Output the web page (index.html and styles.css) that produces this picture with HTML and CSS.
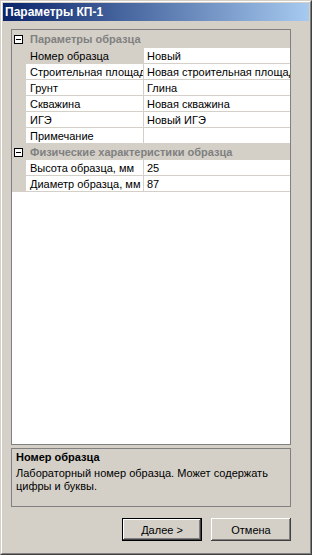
FILE: index.html
```html
<!DOCTYPE html>
<html lang="ru">
<head>
    <meta charset="UTF-8">
    <meta name="viewport" content="width=device-width, initial-scale=1.0">
    <title>Параметры КП-1</title>
    <link rel="stylesheet" href="styles.css">
</head>
<body>
    <div class="window">
        <div class="frame">
            <div class="titlebar">Параметры КП-1</div>
            <div class="client">
                <div class="grid">
                    <div class="row cat first">
                        <span class="gutter"><span class="toggle"></span></span>
                        <span class="cat-name">Параметры образца</span>
                    </div>
                    <div class="row selected">
                        <span class="gutter"></span>
                        <span class="name">Номер образца</span>
                        <span class="value">Новый</span>
                    </div>
                    <div class="row">
                        <span class="gutter"></span>
                        <span class="name">Строительная площадка</span>
                        <span class="value">Новая строительная площадка</span>
                    </div>
                    <div class="row">
                        <span class="gutter"></span>
                        <span class="name">Грунт</span>
                        <span class="value">Глина</span>
                    </div>
                    <div class="row">
                        <span class="gutter"></span>
                        <span class="name">Скважина</span>
                        <span class="value">Новая скважина</span>
                    </div>
                    <div class="row">
                        <span class="gutter"></span>
                        <span class="name">ИГЭ</span>
                        <span class="value">Новый ИГЭ</span>
                    </div>
                    <div class="row">
                        <span class="gutter"></span>
                        <span class="name">Примечание</span>
                        <span class="value"></span>
                    </div>
                    <div class="row cat">
                        <span class="gutter"><span class="toggle"></span></span>
                        <span class="cat-name">Физические характеристики образца</span>
                    </div>
                    <div class="row">
                        <span class="gutter"></span>
                        <span class="name">Высота образца, мм</span>
                        <span class="value">25</span>
                    </div>
                    <div class="row">
                        <span class="gutter"></span>
                        <span class="name">Диаметр образца, мм</span>
                        <span class="value">87</span>
                    </div>
                </div>

                <div class="help">
                    <div class="help-title">Номер образца</div>
                    <div class="help-text">Лабораторный номер образца. Может содержать цифры и буквы.</div>
                </div>

                <div class="buttons">
                    <button class="btn default">Далее &gt;</button>
                    <button class="btn">Отмена</button>
                </div>
            </div>
        </div>
    </div>
</body>
</html>
```

FILE: styles.css
```css
html, body {
    margin: 0;
    padding: 0;
}
body {
    font-family: "Liberation Sans", Arial, sans-serif;
    font-size: 11px;
    color: #000;
    background-color: #d4d0c8;
}
.window {
    width: 312px;
    height: 555px;
    box-sizing: border-box;
    border: 1px solid;
    border-color: #d4d0c8 #404040 #404040 #d4d0c8;
}
.frame {
    height: 100%;
    box-sizing: border-box;
    border: 1px solid;
    border-color: #fff #808080 #808080 #fff;
    padding: 1px;
    display: flex;
    flex-direction: column;
}
.titlebar {
    height: 18px;
    line-height: 18px;
    padding-left: 2px;
    font-size: 12px;
    font-weight: bold;
    color: #fff;
    background: linear-gradient(to right, #0a246a, #a6caf0);
    white-space: nowrap;
}
.client {
    flex: 1;
    display: flex;
    flex-direction: column;
    padding: 8px 18px 11px 8px;
}

/* property grid */
.grid {
    height: 416px;
    box-sizing: border-box;
    border: 1px solid #808080;
    background-color: #fff;
    overflow: hidden;
}
.row {
    display: flex;
    height: 16px;
    line-height: 15px;
}
.row.first {
    height: 17px;
    padding-top: 1px;
}
.gutter {
    width: 14px;
    flex: none;
    background-color: #d4d0c8;
    display: flex;
    align-items: center;
    padding-left: 2px;
    box-sizing: border-box;
}
.toggle {
    position: relative;
    width: 9px;
    height: 9px;
    box-sizing: border-box;
    border: 1px solid #000;
    background-color: #fff;
}
.toggle::after {
    content: "";
    position: absolute;
    left: 1px;
    top: 3px;
    width: 5px;
    height: 1px;
    background-color: #000;
}
.name,
.value {
    box-sizing: border-box;
    border-bottom: 1px solid #d4d0c8;
    padding-top: 1px;
    white-space: nowrap;
    overflow: hidden;
}
.name {
    width: 118px;
    flex: none;
    padding-left: 4px;
    border-right: 1px solid #d4d0c8;
}
.value {
    flex: 1;
    padding-left: 3px;
}
.row.selected .name {
    background-color: #d4d0c8;
}
.row.cat {
    background-color: #d4d0c8;
}
.cat-name {
    padding-left: 4px;
    padding-top: 1px;
    font-weight: bold;
    color: #808080;
    white-space: nowrap;
}

/* description */
.help {
    margin-top: 3px;
    height: 59px;
    box-sizing: border-box;
    border: 1px solid #808080;
    padding: 2px 4px 0 4px;
    line-height: 13px;
}
.help-title {
    font-weight: bold;
    margin-bottom: 3px;
}

/* buttons */
.buttons {
    margin-top: 11px;
    display: flex;
    justify-content: flex-end;
    gap: 9px;
}
.btn {
    width: 80px;
    height: 23px;
    padding: 0;
    font-family: "Liberation Sans", Arial, sans-serif;
    font-size: 11px;
    color: #000;
    background-color: #d4d0c8;
    border: none;
    border-radius: 0;
    box-shadow: inset -1px -1px #404040, inset 1px 1px #fff, inset -2px -2px #808080, inset 2px 2px #d4d0c8;
}
.btn.default {
    border: 1px solid #000;
    box-shadow: inset -1px -1px #404040, inset 1px 1px #fff, inset -2px -2px #808080;
}
```
